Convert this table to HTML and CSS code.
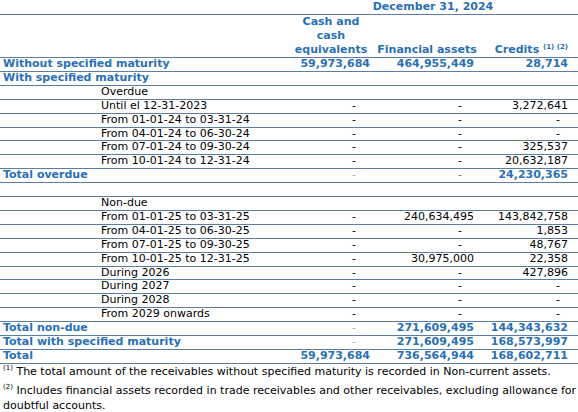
FILE: index.html
```html
<!DOCTYPE html>
<html lang="en">
<head>
    <meta charset="UTF-8">
    <title>Receivables by maturity</title>
    <link rel="stylesheet" href="styles.css">
</head>
<body>
    <table class="sheet">
        <colgroup>
            <col class="c_a">
            <col class="c_b">
            <col class="c_c">
            <col class="c_d">
            <col class="c_e">
        </colgroup>
        <tr class="top">
            <td></td>
            <td></td>
            <td colspan="3" class="date">December 31, 2024</td>
        </tr>
        <tr class="head">
            <td></td>
            <td></td>
            <td class="h_c">Cash and cash equivalents</td>
            <td class="h_d">Financial assets</td>
            <td class="h_e">Credits <sup>(1) (2)</sup></td>
        </tr>
        <tr class="total">
            <td colspan="2" class="lbl">Without specified maturity</td>
            <td class="num n_c">59,973,684</td>
            <td class="num n_d">464,955,449</td>
            <td class="num n_e">28,714</td>
        </tr>
        <tr class="total">
            <td colspan="2" class="lbl">With specified maturity</td>
            <td></td><td></td><td></td>
        </tr>
        <tr><td></td><td class="sub">Overdue</td><td></td><td></td><td></td></tr>
        <tr><td></td><td class="sub">Until el 12-31-2023</td><td class="dash">-</td><td class="dash">-</td><td class="num n_e">3,272,641</td></tr>
        <tr><td></td><td class="sub">From 01-01-24 to 03-31-24</td><td class="dash">-</td><td class="dash">-</td><td class="dash">-</td></tr>
        <tr><td></td><td class="sub">From 04-01-24 to 06-30-24</td><td class="dash">-</td><td class="dash">-</td><td class="dash">-</td></tr>
        <tr><td></td><td class="sub">From 07-01-24 to 09-30-24</td><td class="dash">-</td><td class="dash">-</td><td class="num n_e">325,537</td></tr>
        <tr><td></td><td class="sub">From 10-01-24 to 12-31-24</td><td class="dash">-</td><td class="dash">-</td><td class="num n_e">20,632,187</td></tr>
        <tr class="total">
            <td colspan="2" class="lbl">Total overdue</td>
            <td class="dash light">-</td>
            <td class="dash grey">-</td>
            <td class="num n_e">24,230,365</td>
        </tr>
        <tr><td></td><td></td><td></td><td></td><td></td></tr>
        <tr><td></td><td class="sub">Non-due</td><td></td><td></td><td></td></tr>
        <tr><td></td><td class="sub">From 01-01-25 to 03-31-25</td><td class="dash">-</td><td class="num n_d">240,634,495</td><td class="num n_e">143,842,758</td></tr>
        <tr><td></td><td class="sub">From 04-01-25 to 06-30-25</td><td class="dash">-</td><td class="dash">-</td><td class="num n_e">1,853</td></tr>
        <tr><td></td><td class="sub">From 07-01-25 to 09-30-25</td><td class="dash">-</td><td class="dash">-</td><td class="num n_e">48,767</td></tr>
        <tr><td></td><td class="sub">From 10-01-25 to 12-31-25</td><td class="dash">-</td><td class="num n_d">30,975,000</td><td class="num n_e">22,358</td></tr>
        <tr><td></td><td class="sub">During 2026</td><td class="dash">-</td><td class="dash">-</td><td class="num n_e">427,896</td></tr>
        <tr><td></td><td class="sub">During 2027</td><td class="dash">-</td><td class="dash">-</td><td class="dash">-</td></tr>
        <tr><td></td><td class="sub">During 2028</td><td class="dash">-</td><td class="dash">-</td><td class="dash">-</td></tr>
        <tr><td></td><td class="sub">From 2029 onwards</td><td class="dash">-</td><td class="dash">-</td><td class="dash">-</td></tr>
        <tr class="total">
            <td colspan="2" class="lbl">Total non-due</td>
            <td class="dash light">-</td>
            <td class="num n_d">271,609,495</td>
            <td class="num n_e">144,343,632</td>
        </tr>
        <tr class="total">
            <td colspan="2" class="lbl">Total with specified maturity</td>
            <td class="dash light">-</td>
            <td class="num n_d">271,609,495</td>
            <td class="num n_e">168,573,997</td>
        </tr>
        <tr class="total">
            <td colspan="2" class="lbl">Total</td>
            <td class="num n_c">59,973,684</td>
            <td class="num n_d">736,564,944</td>
            <td class="num n_e">168,602,711</td>
        </tr>
    </table>
    <p class="note"><sup>(1)</sup> The total amount of the receivables without specified maturity is recorded in Non-current assets.</p>
    <p class="note"><sup>(2)</sup> Includes financial assets recorded in trade receivables and other receivables, excluding allowance for doubtful accounts.</p>
</body>
</html>
```
FILE: styles.css
```css
body {
    margin: 0;
    background-color: #ffffff;
    color: #000000;
    font-family: "DejaVu Sans", Verdana, sans-serif;
    font-size: 11px;
}
.sheet {
    width: 578px;
    border-collapse: collapse;
    table-layout: fixed;
}
.c_a { width: 100px; }
.c_b { width: 188px; }
.c_c { width: 86px; }
.c_d { width: 106px; }
.c_e { width: 98px; }
.sheet td {
    height: 12.9px;
    line-height: 12.9px;
    padding: 0;
    border-bottom: 1px solid #5b7ea6;
    white-space: nowrap;
    overflow: hidden;
}
.top td {
    height: 14px;
    line-height: 14px;
}
.date {
    text-align: center;
    font-weight: bold;
    color: #2a70b4;
}
.head td {
    vertical-align: bottom;
    font-weight: bold;
    color: #2a70b4;
    line-height: 14px;
}
.head .h_c {
    white-space: normal;
    text-align: center;
    padding: 0 6px;
}
.h_d {
    text-align: center;
}
.h_e {
    text-align: right;
    padding-right: 10px !important;
}
sup {
    font-size: 7px;
    line-height: 0;
    vertical-align: 4px;
}
.total td {
    font-weight: bold;
    color: #2a70b4;
}
.lbl {
    padding-left: 3px !important;
}
.sub {
    padding-left: 1px !important;
}
.num {
    text-align: right;
}
.n_c { padding-right: 4px !important; }
.n_d { padding-right: 6px !important; }
.n_e { padding-right: 10px !important; }
.dash {
    text-align: right;
    padding-right: 18px !important;
}
.total .dash {
    font-weight: normal;
}
.total .light {
    color: #8fb4da;
}
.total .grey {
    color: #666666;
}
.note {
    margin: 0 0 4px 3px;
    line-height: 15px;
}
.note sup {
    vertical-align: 5px;
}
```
